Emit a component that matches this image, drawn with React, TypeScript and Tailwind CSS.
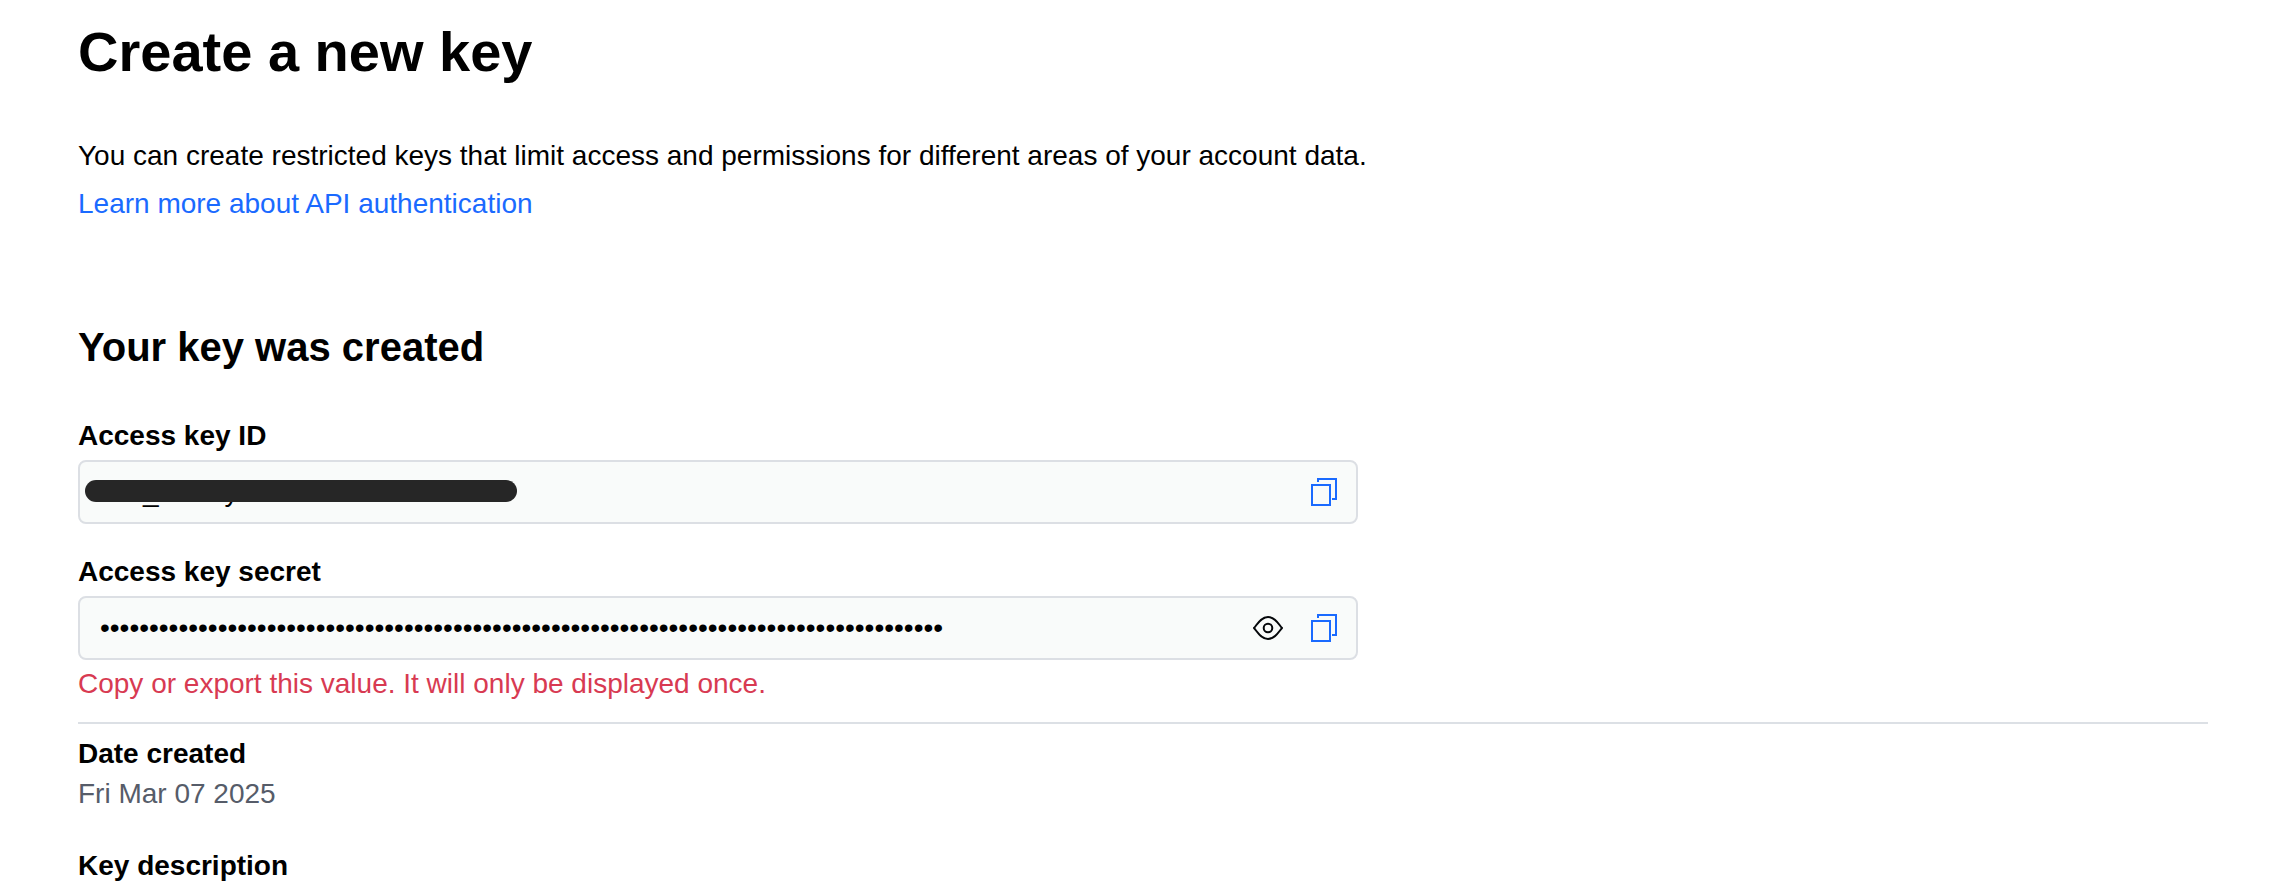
import type { ReactNode } from "react";

function CopyIcon() {
  return (
    <svg width="28" height="28" viewBox="0 0 28 28" fill="none" stroke="#1a6aff" strokeWidth="2" className="block">
      <path d="M2 7H20V27H2Z M8 4V1H26V21H22" />
    </svg>
  );
}

function EyeIcon() {
  return (
    <svg width="32" height="32" viewBox="0 0 32 32" fill="none" stroke="#05070a" strokeWidth="2" className="block">
      <path d="M2 16C5.500 12 9 5 16 5s10.500 7 14 11c-3.500 4-7 11-14 11S5.500 20 2 16Z" strokeLinejoin="round" />
      <circle cx="16" cy="16" r="4.300" />
    </svg>
  );
}

function Field({ children }: { children: ReactNode }) {
  return (
    <div className="mt-1 flex h-16 w-[1280px] items-center rounded-lg border-2 border-[#dcdfe4] bg-[#f9fbfa] pl-5 pr-[18px]">
      {children}
    </div>
  );
}

function Label({ children }: { children: ReactNode }) {
  return <div className="font-bold">{children}</div>;
}

export default function App() {
  return (
    <main className="h-[896px] overflow-hidden bg-white pl-[78px] pr-[62px] pt-5 font-['Liberation_Sans',Arial,sans-serif] text-[28px] leading-10 text-black">
      <h1 className="text-[56px] font-bold leading-[64px]">Create a new key</h1>
      <p className="mt-12 leading-[48px]">
        You can create restricted keys that limit access and permissions for different areas of your account data.
      </p>
      <a href="#" className="block leading-[48px] text-[#1a6aff]">
        Learn more about API authentication
      </a>

      <h2 className="mt-[91px] text-[40px] font-bold leading-[56px]">Your key was created</h2>

      <section className="mt-[41px]">
        <Label>Access key ID</Label>
        <Field>
          <div className="relative flex flex-1">
            <span className="ml-[43px]">_</span>
            <span className="ml-[66px]">y</span>
            <span className="absolute -left-[15px] top-[7.8px] h-[22.5px] w-[432px] rounded-full bg-[#262626]" />
          </div>
          <CopyIcon />
        </Field>
      </section>

      <section className="mt-7">
        <Label>Access key secret</Label>
        <Field>
          <span className="flex-1">{"•".repeat(86)}</span>
          <span className="mr-[26px]">
            <EyeIcon />
          </span>
          <CopyIcon />
        </Field>
        <p className="mt-1 text-[#d83a52]">Copy or export this value. It will only be displayed once.</p>
      </section>

      <hr className="mt-[18px] border-0 border-t-2 border-[#dce0e5]" />

      <section className="mt-2.5">
        <Label>Date created</Label>
        <p className="text-[#565c69]">Fri Mar 07 2025</p>
      </section>

      <section className="mt-8">
        <Label>Key description</Label>
      </section>
    </main>
  );
}
